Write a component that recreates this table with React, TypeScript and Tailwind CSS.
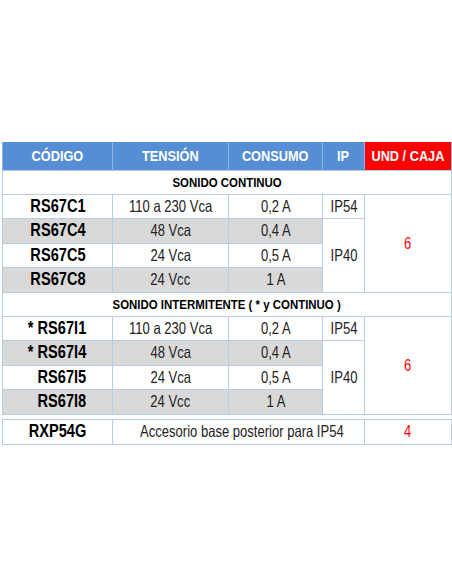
import React from "react";

type Row = {
  code: string;
  tension: string;
  consumo: string;
  gray?: boolean;
  shift?: boolean;
};

const continuo: Row[] = [
  { code: "RS67C1", tension: "110 a 230 Vca", consumo: "0,2 A" },
  { code: "RS67C4", tension: "48 Vca", consumo: "0,4 A", gray: true },
  { code: "RS67C5", tension: "24 Vca", consumo: "0,5 A" },
  { code: "RS67C8", tension: "24 Vcc", consumo: "1 A", gray: true },
];

const intermitente: Row[] = [
  { code: "* RS67I1", tension: "110 a 230 Vca", consumo: "0,2 A" },
  { code: "* RS67I4", tension: "48 Vca", consumo: "0,4 A", gray: true },
  { code: "RS67I5", tension: "24 Vca", consumo: "0,5 A", shift: true },
  { code: "RS67I8", tension: "24 Vcc", consumo: "1 A", gray: true, shift: true },
];

const cell = "border border-[#b8cce4] text-center align-middle p-0 leading-none";
const head = "border-x border-[#8db3e2] text-center align-middle p-0 leading-none text-white font-bold";

const Txt: React.FC<{ className?: string; children: React.ReactNode }> = ({ className, children }) => (
  <span className={"inline-block whitespace-nowrap " + (className ?? "")}>{children}</span>
);

const Code: React.FC<{ children: React.ReactNode }> = ({ children }) => (
  <Txt className="text-[18.5px] leading-none font-bold text-black scale-x-[0.79]">{children}</Txt>
);

const Val: React.FC<{ children: React.ReactNode; red?: boolean }> = ({ children, red }) => (
  <Txt className={"text-[16.5px] leading-none scale-x-[0.79] " + (red ? "text-[#ff0000]" : "text-[#222]")}>
    {children}
  </Txt>
);

const Section: React.FC<{ title: string; rows: Row[] }> = ({ title, rows }) => (
  <>
    <tr className="h-[24px]">
      <td colSpan={5} className={cell}>
        <Txt className="text-[13px] leading-none font-bold text-black scale-x-[0.88]">{title}</Txt>
      </td>
    </tr>
    {rows.map((r, i) => {
      const bg = r.gray ? "bg-[#d9d9d9]" : "bg-white";
      return (
        <tr key={r.code} className={i % 2 === 1 ? "h-[25px]" : "h-[24px]"}>
          <td className={`${cell} ${bg} ${r.shift ? "pl-[9px]" : ""}`}>
            <Code>{r.code}</Code>
          </td>
          <td className={`${cell} ${bg}`}>
            <Val>{r.tension}</Val>
          </td>
          <td className={`${cell} ${bg}`}>
            <Val>{r.consumo}</Val>
          </td>
          {i === 0 && (
            <td className={cell}>
              <Val>IP54</Val>
            </td>
          )}
          {i === 1 && (
            <td rowSpan={3} className={cell}>
              <Val>IP40</Val>
            </td>
          )}
          {i === 0 && (
            <td rowSpan={4} className={cell}>
              <Val red>6</Val>
            </td>
          )}
        </tr>
      );
    })}
  </>
);

const Cols = () => (
  <colgroup>
    <col className="w-[110px]" />
    <col className="w-[116px]" />
    <col className="w-[94px]" />
    <col className="w-[42px]" />
    <col className="w-[87px]" />
  </colgroup>
);

export default function App() {
  return (
    <div className="w-[452px] h-[584px] bg-white pt-[142px] pl-[2px] font-['Liberation_Sans',Arial,sans-serif]">
      <table className="w-[449px] table-fixed border-collapse">
        <Cols />
        <thead>
          <tr className="h-[28px] bg-[#558ed5]">
            <th className={head}>
              <Txt className="text-[15px] leading-none scale-x-[0.85]">CÓDIGO</Txt>
            </th>
            <th className={head}>
              <Txt className="text-[15px] leading-none scale-x-[0.85]">TENSIÓN</Txt>
            </th>
            <th className={head}>
              <Txt className="text-[15px] leading-none scale-x-[0.85]">CONSUMO</Txt>
            </th>
            <th className={head}>
              <Txt className="text-[15px] leading-none scale-x-[0.85]">IP</Txt>
            </th>
            <th className={`${head} bg-[#ff0000]`}>
              <Txt className="text-[15px] leading-none scale-x-[0.85]">UND / CAJA</Txt>
            </th>
          </tr>
        </thead>
        <tbody>
          <Section title="SONIDO CONTINUO" rows={continuo} />
          <Section title="SONIDO INTERMITENTE ( * y CONTINUO )" rows={intermitente} />
        </tbody>
      </table>

      <table className="w-[449px] table-fixed border-collapse mt-[4px]">
        <Cols />
        <tbody>
          <tr className="h-[25px]">
            <td className={cell}>
              <Code>RXP54G</Code>
            </td>
            <td colSpan={3} className={cell}>
              <Val>Accesorio base posterior para IP54</Val>
            </td>
            <td className={cell}>
              <Val red>4</Val>
            </td>
          </tr>
        </tbody>
      </table>
    </div>
  );
}
